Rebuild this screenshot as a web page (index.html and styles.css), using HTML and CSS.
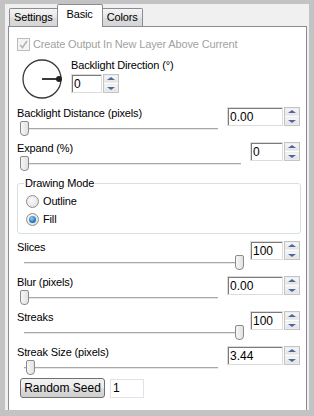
FILE: index.html
```html
<!DOCTYPE html>
<html lang="en">
<head>
    <meta charset="UTF-8">
    <title>Backlight</title>
    <link rel="stylesheet" href="styles.css">
</head>
<body>

<div class="frame">
  <div class="dialog">

    <!-- Abas -->
    <div class="tabs">
      <div class="tab">Settings</div>
      <div class="tab active">Basic</div>
      <div class="tab">Colors</div>
    </div>

    <div class="panel">

      <div class="check disabled">
        <span class="box">
          <svg width="11" height="11" viewBox="0 0 11 11"><path d="M2 6 L4.5 8.5 L9 2" fill="none" stroke="#b4b4b4" stroke-width="1.6"/></svg>
        </span>
        Create Output In New Layer Above Current
      </div>

      <div class="direction">
        <svg class="dial" width="42" height="42" viewBox="0 0 42 42">
          <circle cx="21" cy="21" r="19" fill="none" stroke="#3a3a3a" stroke-width="1.3"/>
          <line x1="21" y1="21" x2="38" y2="21" stroke="#3a3a3a" stroke-width="2"/>
          <circle cx="38" cy="21" r="3" fill="#222"/>
        </svg>
        <div class="direction-right">
          <div class="label">Backlight Direction (°)</div>
          <div class="spin narrow-dir">
            <input type="text" value="0">
            <div class="arrows"><span class="up"></span><span class="down"></span></div>
          </div>
        </div>
      </div>

      <div class="field">
        <div class="left">
          <div class="label">Backlight Distance (pixels)</div>
          <div class="slider"><span class="thumb" style="left:0"></span></div>
        </div>
        <div class="spin wide">
          <input type="text" value="0.00">
          <div class="arrows"><span class="up"></span><span class="down"></span></div>
        </div>
      </div>

      <div class="field">
        <div class="left">
          <div class="label">Expand (%)</div>
          <div class="slider"><span class="thumb" style="left:0"></span></div>
        </div>
        <div class="spin narrow">
          <input type="text" value="0">
          <div class="arrows"><span class="up"></span><span class="down"></span></div>
        </div>
      </div>

      <fieldset class="group">
        <legend>Drawing Mode</legend>
        <div class="radio"><span class="dot"></span>Outline</div>
        <div class="radio"><span class="dot on"></span>Fill</div>
      </fieldset>

      <div class="field">
        <div class="left">
          <div class="label">Slices</div>
          <div class="slider"><span class="thumb" style="left:calc(100% - 6px)"></span></div>
        </div>
        <div class="spin narrow">
          <input type="text" value="100">
          <div class="arrows"><span class="up"></span><span class="down"></span></div>
        </div>
      </div>

      <div class="field">
        <div class="left">
          <div class="label">Blur (pixels)</div>
          <div class="slider"><span class="thumb" style="left:0"></span></div>
        </div>
        <div class="spin wide">
          <input type="text" value="0.00">
          <div class="arrows"><span class="up"></span><span class="down"></span></div>
        </div>
      </div>

      <div class="field">
        <div class="left">
          <div class="label">Streaks</div>
          <div class="slider"><span class="thumb" style="left:calc(100% - 6px)"></span></div>
        </div>
        <div class="spin narrow">
          <input type="text" value="100">
          <div class="arrows"><span class="up"></span><span class="down"></span></div>
        </div>
      </div>

      <div class="field">
        <div class="left">
          <div class="label">Streak Size (pixels)</div>
          <div class="slider"><span class="thumb" style="left:6px"></span></div>
        </div>
        <div class="spin wide">
          <input type="text" value="3.44">
          <div class="arrows"><span class="up"></span><span class="down"></span></div>
        </div>
      </div>

      <div class="seed">
        <button>Random Seed</button>
        <input type="text" value="1">
      </div>

    </div>
  </div>
</div>

</body>
</html>
```

FILE: styles.css
```css
body { margin: 0; font-family: "Liberation Sans", Arial, sans-serif; font-size: 11px; letter-spacing: -0.15px; color: #000; }
.frame { width: 314px; height: 416px; box-sizing: border-box; background: #c3c3c3; padding: 4px 5px 6px 5px; }
.dialog { height: 406px; background: #f0f0f0; overflow: hidden; }

.tabs { display: flex; align-items: flex-end; height: 22px; padding-left: 4px; position: relative; z-index: 1; }
.tab { height: 18px; line-height: 17px; box-sizing: border-box; padding: 0 4px; border: 1px solid #898c95; border-bottom: none; background: linear-gradient(#f4f4f4, #e6e6e6 50%, #dcdcdc 50%, #d6d6d6); margin-right: -1px; }
.tab:first-child { border-radius: 2px 0 0 0; }
.tab.active { height: 23px; margin-bottom: -1px; background: #fff; padding: 0 9px; line-height: 18px; position: relative; z-index: 2; border-radius: 2px 2px 0 0; }
.tab:last-child { border-radius: 0 2px 0 0; }

.panel { margin-left: 3px; width: 299px; height: 386px; box-sizing: border-box; background: #fff; border: 1px solid #898c95; border-bottom: none; padding: 11px 6px 0 8px; }

.label { line-height: 13px; white-space: nowrap; }

.check { display: flex; align-items: center; height: 13px; line-height: 13px; }
.check.disabled { color: #a2a2a2; }
.check .box { width: 11px; height: 11px; border: 1px solid #bcbcbc; background: #f4f4f4; margin-right: 3px; display: flex; }

.direction { display: flex; margin-top: 6px; height: 42px; }
.dial { margin-left: 4px; margin-top: 1px; }
.direction-right { margin-left: 8px; padding-top: 2px; }
.direction-right .spin { margin-top: 2px; }

.field { display: flex; align-items: flex-start; height: 35px; }
.direction + .field { margin-top: 8px; }
.left { flex: 1; margin-right: 5px; }
.slider { position: relative; height: 22px; margin: 0 4px 0 3px; }
.slider::before { content: ""; position: absolute; left: 4px; right: 0; top: 8px; height: 1px; background: #a9a9a9; border-bottom: 1px solid #e6e6e6; }
.thumb { position: absolute; top: 1px; width: 7px; height: 13px; border: 1px solid #8a8a8a; border-radius: 2px 2px 4px 4px; background: linear-gradient(90deg, #f6f6f6, #e2e2e2); }

.spin { display: flex; height: 19px; gap: 1px; }
.spin input { box-sizing: border-box; height: 19px; margin: 0; padding: 0 2px; font: inherit; font-size: 12px; letter-spacing: 0; border: 1px solid #dcdcdc; box-shadow: inset 1px 1px 0 #7a7a7a; outline: none; }
.spin.wide input { width: 56px; }
.spin.narrow input { width: 33px; }
.spin.narrow-dir input { width: 31px; }
.arrows { display: flex; flex-direction: column; width: 16px; height: 19px; box-sizing: border-box; border: 1px solid #c4c4c4; gap: 1px; padding: 0; }
.arrows span { flex: 1; position: relative; background: linear-gradient(#f7f7f7, #e3e3e3); border: 1px solid #ececec; }
.arrows span::after { content: ""; position: absolute; left: 50%; top: 50%; margin-left: -4px; border-left: 4px solid transparent; border-right: 4px solid transparent; }
.arrows .up::after { border-bottom: 3px solid #4e66a0; margin-top: -2px; }
.arrows .down::after { border-top: 3px solid #4e66a0; margin-top: -1px; }

.group { margin: 0 0 7px 0; padding: 2px 0 5px 8px; border: 1px solid #d5dfe5; border-radius: 3px; width: 284px; box-sizing: border-box; }
.group legend { padding: 0 1px; margin-left: -2px; line-height: 13px; }
.radio { display: flex; align-items: center; height: 18px; }
.dot { width: 11px; height: 11px; border: 1px solid #8e8f8f; border-radius: 50%; background: radial-gradient(circle at 40% 40%, #fcfcfc, #d9d9d9); margin-right: 4px; position: relative; }
.dot.on::after { content: ""; position: absolute; left: 2px; top: 2px; width: 7px; height: 7px; border-radius: 50%; background: radial-gradient(circle at 40% 35%, #8fd0f6, #1a68b4 70%); }

.seed { display: flex; align-items: center; gap: 5px; margin-top: -3px; margin-left: 3px; }
.seed button { height: 20px; width: 85px; font: inherit; font-size: 12px; letter-spacing: 0; border: 1px solid #707070; border-radius: 3px; background: linear-gradient(#f2f2f2, #ebebeb 50%, #dddddd 50%, #cfcfcf); padding: 0; }
.seed input { width: 34px; height: 19px; box-sizing: border-box; margin: 0; padding: 0 2px; font: inherit; font-size: 12px; letter-spacing: 0; border: 1px solid #e2e3ea; outline: none; }
```
